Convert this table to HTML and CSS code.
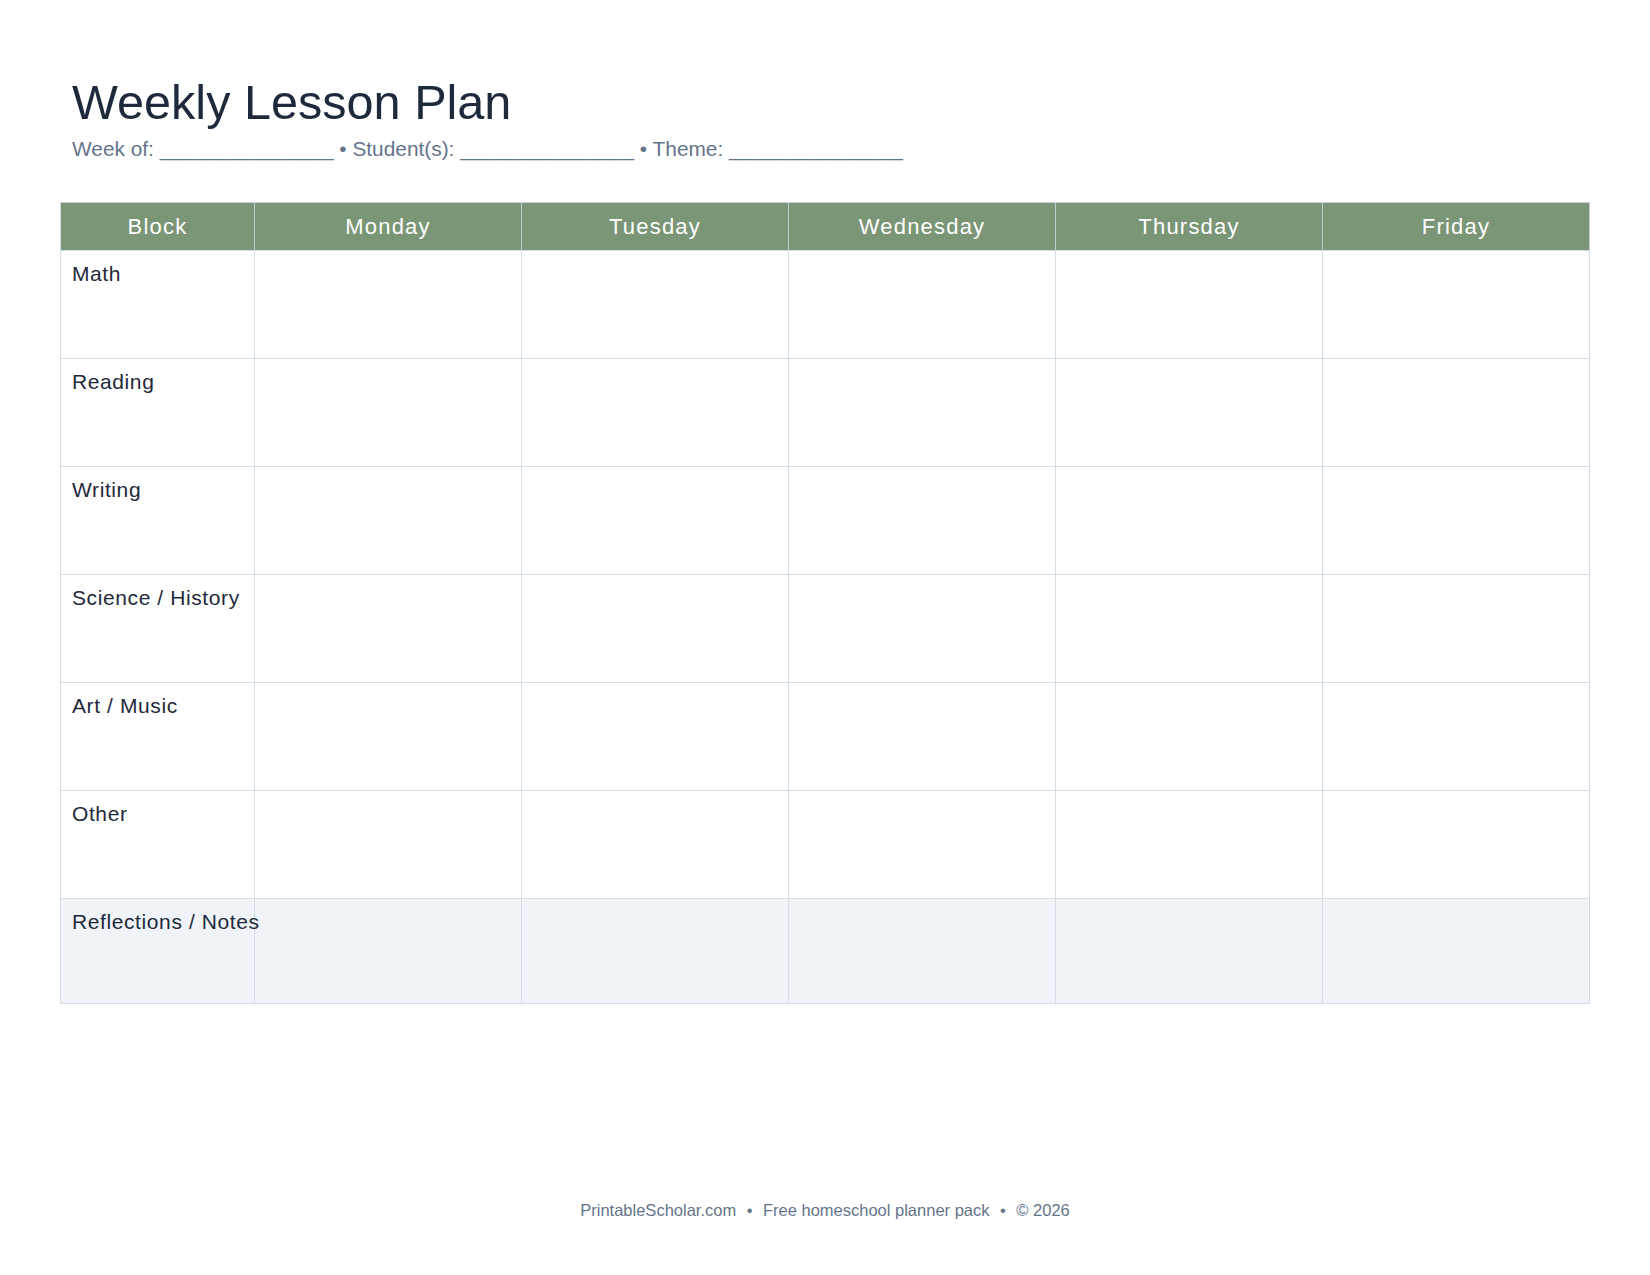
FILE: index.html
```html
<!DOCTYPE html>
<html lang="en">
<head>
<meta charset="utf-8">
<title>Weekly Lesson Plan</title>
<link rel="stylesheet" href="styles.css">
</head>
<body>
<div class="page">
  <header class="head">
    <h1 class="title">Weekly Lesson Plan</h1>
    <p class="meta">Week of: _______________ • Student(s): _______________ • Theme: _______________</p>
  </header>

  <div class="plan">
    <div class="th">Block</div>
    <div class="th">Monday</div>
    <div class="th">Tuesday</div>
    <div class="th">Wednesday</div>
    <div class="th">Thursday</div>
    <div class="th">Friday</div>

    <div class="td label">Math</div>
    <div class="td"></div><div class="td"></div><div class="td"></div><div class="td"></div><div class="td"></div>

    <div class="td label">Reading</div>
    <div class="td"></div><div class="td"></div><div class="td"></div><div class="td"></div><div class="td"></div>

    <div class="td label">Writing</div>
    <div class="td"></div><div class="td"></div><div class="td"></div><div class="td"></div><div class="td"></div>

    <div class="td label">Science / History</div>
    <div class="td"></div><div class="td"></div><div class="td"></div><div class="td"></div><div class="td"></div>

    <div class="td label">Art / Music</div>
    <div class="td"></div><div class="td"></div><div class="td"></div><div class="td"></div><div class="td"></div>

    <div class="td label">Other</div>
    <div class="td"></div><div class="td"></div><div class="td"></div><div class="td"></div><div class="td"></div>

    <div class="td label notes">Reflections / Notes</div>
    <div class="td notes"></div><div class="td notes"></div><div class="td notes"></div><div class="td notes"></div><div class="td notes"></div>
  </div>

  <footer class="foot">
    <span>PrintableScholar.com</span><span class="sep">•</span><span>Free homeschool planner pack</span><span class="sep">•</span><span>© 2026</span>
  </footer>
</div>
</body>
</html>
```

FILE: styles.css
```css
html, body {
  margin: 0;
  padding: 0;
  background: #ffffff;
}

body {
  font-family: "Liberation Sans", Arial, Helvetica, sans-serif;
  color: #1e293b;
}

.page {
  box-sizing: border-box;
  min-height: 1275px;
  padding: 74px 60px 55px;
  display: flex;
  flex-direction: column;
}

.head {
  padding-left: 12px;
}

.title {
  margin: 0;
  font-size: 48.6px;
  font-weight: 400;
  line-height: normal;
  color: #1e293b;
}

.meta {
  margin: 7px 0 0;
  font-size: 20.85px;
  line-height: normal;
  color: #64748b;
}

.plan {
  margin-top: 41px;
  display: grid;
  grid-template-columns: 194px repeat(5, 1fr);
  grid-template-rows: 48px repeat(6, 108px) 105px;
  border-top: 1px solid #c9d1d9;
  border-left: 1px solid #d5dde6;
}

.th {
  background: #7a9676;
  color: #ffffff;
  font-size: 22px;
  letter-spacing: 1.2px;
  display: flex;
  align-items: center;
  justify-content: center;
  border-right: 1px solid #c3ccd4;
  border-bottom: 1px solid #d5dde6;
}

.td {
  border-right: 1px solid #d5dde6;
  border-bottom: 1px solid #d5dde6;
  min-width: 0;
}

.label {
  padding: 11px 11px 0;
  font-size: 21px;
  letter-spacing: 0.6px;
  line-height: normal;
  white-space: nowrap;
  color: #1e293b;
  position: relative;
  z-index: 1;
}

.notes {
  background: #f0f4f9;
}

.foot {
  margin-top: auto;
  text-align: center;
  font-size: 16.5px;
  color: #64748b;
}

.sep {
  margin: 0 10.5px;
}
```
